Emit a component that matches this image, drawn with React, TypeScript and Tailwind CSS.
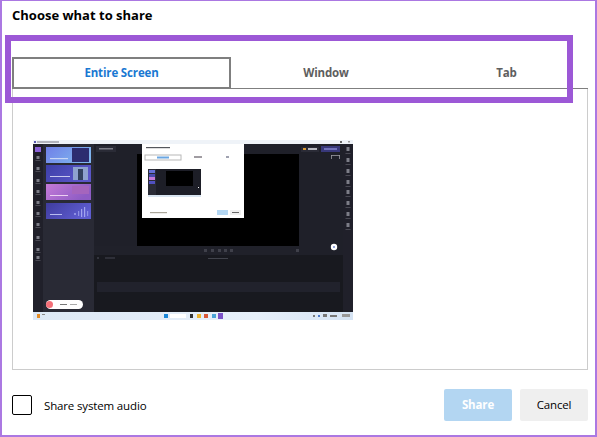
const CARDS = [
  { y: 147, h: 16, from: "#6f7fe8", to: "#7fb4ee", id: "c1" },
  { y: 165, h: 17, from: "#3d3fa8", to: "#5a56c8", id: "c2" },
  { y: 184, h: 16, from: "#c47ad8", to: "#8e5cc4", id: "c3" },
  { y: 203, h: 16, from: "#3f3c9e", to: "#5e5cd0", id: "c4" },
];

function ScreenThumbnail() {
  return (
    <svg viewBox="33 140 320 180" className="block h-[180px] w-[320px]">
      <defs>
        {CARDS.map((card) => (
          <linearGradient key={card.id} id={card.id} x1="0" y1="0" x2="1" y2="0.4">
            <stop offset="0" stopColor={card.from} />
            <stop offset="1" stopColor={card.to} />
          </linearGradient>
        ))}
        <linearGradient id="taskbar" x1="0" y1="0" x2="1" y2="0">
          <stop offset="0" stopColor="#dde8f5" />
          <stop offset="0.7" stopColor="#e6eff9" />
          <stop offset="1" stopColor="#d5e3f3" />
        </linearGradient>
      </defs>

      {/* app window */}
      <rect x="33" y="140" width="320" height="172" fill="#1f2029" />
      <rect x="33" y="140" width="320" height="4" fill="#eff3f8" />
      <rect x="34" y="141" width="2" height="2" fill="#5a5ab0" />
      <rect x="37" y="141.4" width="22" height="1.2" fill="#8a8c96" />
      <rect x="340" y="141" width="2" height="2" fill="#666" />
      <rect x="348" y="141" width="2" height="1.5" fill="#999" />

      {/* left rail + template panel */}
      <rect x="33" y="144" width="10" height="168" fill="#20202a" />
      <rect x="43" y="144" width="51" height="168" fill="#292a35" />
      <rect x="35" y="147" width="6" height="5" fill="#8b62d8" />
      {[156, 167, 179, 190, 201, 212, 223, 236, 248, 256].map((y) => (
        <g key={y}>
          <rect x="36.5" y={y} width="3" height="3" fill="#7d7e88" />
          <rect x="35.5" y={y + 4} width="5" height="0.8" fill="#55565f" />
        </g>
      ))}
      {CARDS.map((card) => (
        <rect key={card.id} x="46" y={card.y} width="45" height={card.h} fill={`url(#${card.id})`} />
      ))}
      <rect x="50" y="158" width="18" height="1.2" fill="#c8d6f5" />
      <rect x="72" y="148" width="17" height="14" fill="#2c2c70" />
      <rect x="50" y="176" width="20" height="1" fill="#c8c8ee" />
      <rect x="73" y="167" width="15" height="13" fill="#8fa3cf" />
      <rect x="78" y="169" width="5" height="11" fill="#33425f" />
      <rect x="50" y="195" width="18" height="1" fill="#ecd0f2" />
      <rect x="72" y="186" width="17" height="8" fill="#a565bd" />
      <rect x="50" y="214" width="12" height="1" fill="#b8bcf0" />
      <rect x="74" y="213" width="2" height="2" fill="#8e90e4" />
      <rect x="78" y="211" width="1.2" height="5" fill="#8e90e4" />
      <rect x="81" y="209" width="1.2" height="8" fill="#a2a4ee" />
      <rect x="84" y="207" width="1.2" height="10" fill="#a2a4ee" />
      <rect x="87" y="211" width="1.2" height="5" fill="#8e90e4" />

      {/* top bar buttons */}
      <rect x="96" y="146" width="20" height="6" fill="#2a2b36" />
      <rect x="99" y="148" width="14" height="1.5" fill="#7b7c86" />
      <rect x="301" y="147" width="18" height="5" fill="#2a2b36" />
      <rect x="303" y="148" width="3" height="2" fill="#d99a35" />
      <rect x="308" y="148" width="9" height="2" fill="#b8b9c0" />
      <rect x="321" y="146" width="19" height="6" fill="#38387a" />
      <rect x="324" y="148" width="13" height="2" fill="#6f70b8" />
      <rect x="331" y="155" width="9" height="0.8" fill="#9a9aa2" />
      <rect x="331" y="155" width="0.8" height="4" fill="#9a9aa2" />
      <rect x="339" y="155" width="0.8" height="4" fill="#9a9aa2" />

      {/* canvas */}
      <rect x="137" y="154" width="162" height="92" fill="#000000" />

      {/* right rail */}
      <rect x="343" y="144" width="10" height="168" fill="#20202a" />
      {[147, 158, 169, 180, 190, 201, 212, 223].map((y) => (
        <g key={y}>
          <rect x="346.5" y={y} width="3" height="4" fill="#7d7e88" />
          <rect x="345.5" y={y + 6} width="5" height="0.8" fill="#55565f" />
        </g>
      ))}

      {/* timeline */}
      <rect x="94" y="246" width="205" height="9" fill="#20212a" />
      {[204, 211, 218, 224, 230, 296].map((x) => (
        <rect key={x} x={x} y="249" width="3" height="3" fill="#3f404a" />
      ))}
      <rect x="94" y="255" width="249" height="57" fill="#18191f" />
      <rect x="208" y="258" width="20" height="0.8" fill="#4d4e58" />
      <rect x="97" y="257" width="2" height="2" fill="#33343d" />
      <rect x="105" y="257" width="10" height="2" fill="#2e2f38" />
      <rect x="97" y="282" width="243" height="10" fill="#21222c" />
      <circle cx="334" cy="247" r="3.2" fill="#ffffff" />
      <rect x="333.5" y="246" width="1" height="2" fill="#3050c0" />

      {/* recording pill */}
      <rect x="46" y="300" width="37" height="9" rx="4.5" fill="#ffffff" />
      <circle cx="49.5" cy="304.5" r="3.5" fill="#f36f78" />
      <rect x="60" y="304" width="7" height="1" fill="#777" />
      <rect x="70" y="304" width="7" height="1" fill="#aaa" />

      {/* taskbar */}
      <rect x="33" y="312" width="320" height="8" fill="url(#taskbar)" />
      <rect x="37" y="314" width="3" height="4" fill="#e58d25" />
      <rect x="42" y="314" width="3" height="1" fill="#888" />
      <rect x="164" y="314" width="4" height="4" fill="#1a86d8" />
      <rect x="170" y="314" width="16" height="4" fill="#ffffff" />
      <rect x="190" y="314" width="3" height="4" fill="#333" />
      <rect x="197" y="314" width="4" height="4" fill="#eeb52e" />
      <rect x="204" y="314" width="4" height="4" fill="#d9583a" />
      <rect x="212" y="314" width="4" height="4" fill="#4aa4d8" />
      <rect x="218" y="313" width="5" height="6" fill="#7a52c8" />
      <rect x="313" y="315" width="2" height="2" fill="#777" />
      <rect x="318" y="315" width="2" height="2" fill="#4c78c8" />
      <rect x="323" y="314" width="4" height="3" fill="#777" />
      <rect x="330" y="315" width="7" height="2" fill="#777" />
      <rect x="342" y="314" width="8" height="3" fill="#999" />

      {/* the nested share dialog */}
      <rect x="142" y="144" width="102" height="74" fill="#ffffff" />
      <rect x="146" y="147" width="24" height="1.2" fill="#55575d" />
      <rect x="145" y="155" width="36" height="5" fill="#ffffff" stroke="#b8b8b8" />
      <rect x="157" y="156.5" width="12" height="2" fill="#6aa6e2" />
      <rect x="194" y="156" width="8" height="2" fill="#a09ca2" />
      <rect x="226" y="156" width="3" height="2" fill="#a0a2b0" />
      <rect x="148" y="169" width="53" height="28" fill="#1d1e27" />
      <rect x="148" y="169" width="8" height="28" fill="#2a2b36" />
      <rect x="149" y="170" width="6" height="3" fill="#6670d8" />
      <rect x="149" y="174" width="6" height="3" fill="#4a4cb0" />
      <rect x="149" y="177" width="6" height="3" fill="#c47ad8" />
      <rect x="149" y="181" width="6" height="3" fill="#5050c0" />
      <rect x="166" y="171" width="27" height="15" fill="#000000" />
      <rect x="198" y="187" width="1" height="1" fill="#ffffff" />
      <rect x="148" y="195" width="53" height="2" fill="#d8e4f0" />
      <rect x="150" y="212" width="17" height="1.2" fill="#aaa69a" />
      <rect x="217" y="210" width="11" height="5" fill="#b3d6f2" />
      <rect x="230" y="210" width="11" height="5" fill="#efefef" />
      <rect x="232" y="212" width="7" height="1" fill="#666" />
    </svg>
  );
}

export default function App() {
  return (
    <div className="relative flex h-[437px] w-[597px] flex-col border-2 border-t-[1.5px] border-[#ab78e2] bg-white pl-[10px] pr-[7px] font-['Open_Sans','Noto_Sans',sans-serif] text-black">
      <h1 className="mt-[4px] h-[20px] text-[13px] leading-[20px] font-bold">Choose what to share</h1>

      <div className="mt-[31.5px] flex h-[32px] w-[576px] items-stretch border-b border-[#7f7f7f] text-[11.5px] font-bold tracking-[-0.15px]">
        <button className="-mb-px w-[219px] border-2 border-[#7f7f7f] pt-px text-[#1a78d2]">Entire Screen</button>
        <button className="w-[190px] pt-[2px] text-[#5e5e5e]">Window</button>
        <button className="w-[167px] pt-[2px] pl-[4px] text-[#5e5e5e]">Tab</button>
      </div>

      <div className="h-[281px] w-[576px] border border-t-0 border-[#cccccc] pt-[51px] pl-[20px]">
        <ScreenThumbnail />
      </div>

      <div className="mt-[19px] flex h-[32px] w-[576px] items-center">
        <span className="h-[20px] w-[20px] rounded-[2px] border border-black" />
        <span className="ml-[12px] pt-[2px] text-[11.5px] tracking-[-0.15px]">Share system audio</span>
        <button className="ml-auto h-[32px] w-[68px] rounded-[2px] bg-[#b3d6f2] text-[11.5px] font-bold tracking-[-0.15px] text-white">Share</button>
        <button className="ml-[8px] h-[32px] w-[68px] rounded-[2px] bg-[#efefef] text-[11.5px] tracking-[-0.15px] text-black">Cancel</button>
      </div>

      {/* annotation drawn over the screenshot */}
      <div className="pointer-events-none absolute top-[33.5px] left-[3px] h-[68px] w-[568px] border-[6px] border-[#9c58d6]" />
    </div>
  );
}
